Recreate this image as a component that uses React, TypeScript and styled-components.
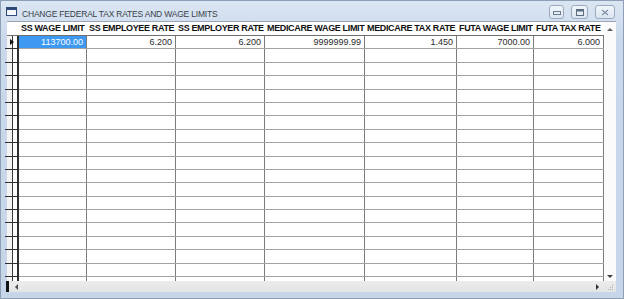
import React from 'react'
import styled, { createGlobalStyle } from 'styled-components'

const GlobalStyle = createGlobalStyle`
    html, body {
        margin: 0;
        padding: 0;
        background: #ffffff;
    }
`

interface IColumn {
    label: string
    width: number
    value: string
}

const columns: IColumn[] = [
    { label: 'SS WAGE LIMIT', width: 68, value: '113700.00' },
    { label: 'SS EMPLOYEE RATE', width: 89, value: '6.200' },
    { label: 'SS EMPLOYER RATE', width: 89, value: '6.200' },
    { label: 'MEDICARE WAGE LIMIT', width: 100, value: '9999999.99' },
    { label: 'MEDICARE TAX RATE', width: 92, value: '1.450' },
    { label: 'FUTA WAGE LIMIT', width: 77, value: '7000.00' },
    { label: 'FUTA TAX RATE', width: 70, value: '6.000' }
]

const EMPTY_ROWS = 17

const Window = styled.div`
    width: 624px;
    height: 299px;
    box-sizing: border-box;
    border: 1px solid #8c9fb6;
    background: linear-gradient(#dbe6f3, #c9d8ea 40px, #c6d5e8);
    display: flex;
    flex-direction: column;
    font-family: "Liberation Sans", Arial, sans-serif;
`

const TitleBar = styled.div`
    height: 20px;
    display: flex;
    align-items: center;
    padding: 0 8px 0 5px;
    gap: 5px;
`

const Title = styled.span`
    flex: 1;
    font-size: 8.5px;
    color: #3a3f48;
    letter-spacing: -0.2px;
    padding-top: 5px;
`

const Controls = styled.div`
    display: flex;
    gap: 7px;
    align-self: flex-start;
    margin-top: 4px;
`

const ControlButton = styled.div<{ $w: number }>`
    width: ${p => p.$w}px;
    height: 14px;
    box-sizing: border-box;
    border: 1px solid #9aabc0;
    border-radius: 3px;
    background: linear-gradient(#f2f6fb, #dae4f0);
    display: flex;
    align-items: center;
    justify-content: center;
`

const Body = styled.div`
    flex: 1;
    display: flex;
    margin: 0 7px 6px 6px;
    position: relative;
`

const GridFrame = styled.div`
    flex: 1;
    display: flex;
    flex-direction: column;
    background: #ffffff;
    border-top: 1px solid #9aa6b4;
`

const GridMain = styled.div`
    flex: 1;
    display: flex;
`

const Table = styled.div`
    width: 597px;
    display: flex;
    flex-direction: column;
`

const Row = styled.div<{ $header?: boolean; $fill?: boolean }>`
    display: flex;
    box-sizing: border-box;
    height: ${p => (p.$header ? '14px' : '13.4px')};
    ${p => p.$fill && 'flex: 1; height: auto;'}
    border-bottom: ${p => (p.$fill ? 'none' : p.$header ? '1px solid #6f6f6f' : '1px solid #a2a2a2')};
`

const Indicator = styled.div<{ $header?: boolean }>`
    width: 12px;
    flex: none;
    position: relative;
    box-sizing: border-box;
    border-right: ${p => (p.$header ? 'none' : '2px solid #2e2e2e')};
    background: ${p => (p.$header
        ? '#ffffff'
        : 'linear-gradient(90deg, #f4f4f4 5px, #3a3a3a 5px, #3a3a3a 6px, #ffffff 6px)')};
`

const IndicatorTick = styled.div`
    position: absolute;
    left: -2px;
    right: -2px;
    bottom: -1px;
    height: 1px;
    background: #2e2e2e;
`

const Pointer = styled.div`
    position: absolute;
    left: 3px;
    top: 3px;
    width: 0;
    height: 0;
    border-top: 3px solid transparent;
    border-bottom: 3px solid transparent;
    border-left: 4px solid #111111;
`

const HeaderCell = styled.div<{ $w: number }>`
    width: ${p => p.$w}px;
    flex: none;
    box-sizing: border-box;
    padding: 0 0 0 2px;
    font-weight: bold;
    font-size: 9px;
    letter-spacing: -0.35px;
    line-height: 13px;
    color: #111111;
    white-space: nowrap;
    overflow: hidden;
`

const Cell = styled.div<{ $w: number; $selected?: boolean }>`
    width: ${p => p.$w}px;
    flex: none;
    box-sizing: border-box;
    border-right: 1px solid #7c7c7c;
    padding: 0 3px 0 2px;
    text-align: right;
    font-size: 9px;
    line-height: 12px;
    color: ${p => (p.$selected ? '#ffffff' : '#2a2a2a')};
    background: ${p => (p.$selected ? '#3d99f2' : 'transparent')};
    white-space: nowrap;
    overflow: hidden;
`

const VScroll = styled.div`
    width: 12px;
    flex: none;
    display: flex;
    flex-direction: column;
    justify-content: space-between;
    align-items: center;
    padding: 6px 0 3px;
    background: #fbfbfb;
`

const HScroll = styled.div`
    height: 11px;
    display: flex;
    align-items: center;
    background: linear-gradient(#ececec, #e4e4e4);
`

const HTrack = styled.div`
    width: 597px;
    display: flex;
    justify-content: space-between;
    align-items: center;
    padding: 0 5px 0 8px;
    box-sizing: border-box;
`

const Corner = styled.div`
    flex: 1;
    align-self: stretch;
    display: flex;
    align-items: flex-end;
    justify-content: center;
    padding-bottom: 1px;
`

const Marker = styled.div`
    position: absolute;
    left: -1px;
    bottom: 0;
    width: 3px;
    height: 11px;
    background: #111111;
`

const Arrow = styled.div<{ $dir: 'up' | 'down' | 'left' | 'right' }>`
    width: 0;
    height: 0;
    ${p => p.$dir === 'up' && 'border-left: 3px solid transparent; border-right: 3px solid transparent; border-bottom: 3px solid #606060;'}
    ${p => p.$dir === 'down' && 'border-left: 3px solid transparent; border-right: 3px solid transparent; border-top: 3px solid #404040;'}
    ${p => p.$dir === 'left' && 'border-top: 3px solid transparent; border-bottom: 3px solid transparent; border-right: 3px solid #505050;'}
    ${p => p.$dir === 'right' && 'border-top: 3px solid transparent; border-bottom: 3px solid transparent; border-left: 3px solid #303030;'}
`

const AppIcon = () =>
    <svg width="11" height="9" viewBox="0 0 11 9">
        <rect x="0.5" y="0.5" width="10" height="8" fill="#f4f7fb" stroke="#2d4a78" />
        <rect x="0.5" y="0.5" width="10" height="2.5" fill="#2d4a78" />
    </svg>

const MinIcon = () =>
    <svg width="8" height="6" viewBox="0 0 8 6">
        <rect x="0.5" y="2.5" width="7" height="3" fill="none" stroke="#6d7d90" />
    </svg>

const MaxIcon = () =>
    <svg width="8" height="7" viewBox="0 0 8 7">
        <rect x="0.5" y="0.5" width="7" height="6" fill="none" stroke="#5d6d80" />
        <rect x="1" y="1" width="6" height="1.5" fill="#5d6d80" />
    </svg>

const CloseIcon = () =>
    <svg width="8" height="7" viewBox="0 0 8 7">
        <path d="M1 1 L7 6 M7 1 L1 6" stroke="#8090a4" strokeWidth="1.2" />
    </svg>

const Grip = () =>
    <svg width="8" height="8" viewBox="0 0 8 8">
        <rect x="6" y="2" width="1" height="1" fill="#b0b0b0" />
        <rect x="4" y="4" width="1" height="1" fill="#b0b0b0" />
        <rect x="6" y="4" width="1" height="1" fill="#b0b0b0" />
        <rect x="2" y="6" width="1" height="1" fill="#b0b0b0" />
        <rect x="4" y="6" width="1" height="1" fill="#b0b0b0" />
        <rect x="6" y="6" width="1" height="1" fill="#b0b0b0" />
    </svg>

const EmptyRow = ({ fill }: { fill?: boolean }) =>
    <Row $fill={ fill }>
        <Indicator>{ !fill && <IndicatorTick /> }</Indicator>
        { columns.map(c => <Cell key={ c.label } $w={ c.width } />) }
    </Row>

const App = () =>
    <>
        <GlobalStyle />
        <Window>
            <TitleBar>
                <AppIcon />
                <Title>CHANGE FEDERAL TAX RATES AND WAGE LIMITS</Title>
                <Controls>
                    <ControlButton $w={ 15 }><MinIcon /></ControlButton>
                    <ControlButton $w={ 17 }><MaxIcon /></ControlButton>
                    <ControlButton $w={ 20 }><CloseIcon /></ControlButton>
                </Controls>
            </TitleBar>
            <Body>
                <GridFrame>
                    <GridMain>
                        <Table>
                            <Row $header>
                                <Indicator $header />
                                { columns.map(c => <HeaderCell key={ c.label } $w={ c.width }>{ c.label }</HeaderCell>) }
                            </Row>
                            <Row>
                                <Indicator><Pointer /><IndicatorTick /></Indicator>
                                { columns.map((c, i) =>
                                    <Cell key={ c.label } $w={ c.width } $selected={ i === 0 }>{ c.value }</Cell>) }
                            </Row>
                            { Array.from({ length: EMPTY_ROWS }).map((_, i) => <EmptyRow key={ i } />) }
                            <EmptyRow fill />
                        </Table>
                        <VScroll>
                            <Arrow $dir="up" />
                            <Arrow $dir="down" />
                        </VScroll>
                    </GridMain>
                    <HScroll>
                        <HTrack>
                            <Arrow $dir="left" />
                            <Arrow $dir="right" />
                        </HTrack>
                        <Corner><Grip /></Corner>
                    </HScroll>
                </GridFrame>
                <Marker />
            </Body>
        </Window>
    </>

export default App
